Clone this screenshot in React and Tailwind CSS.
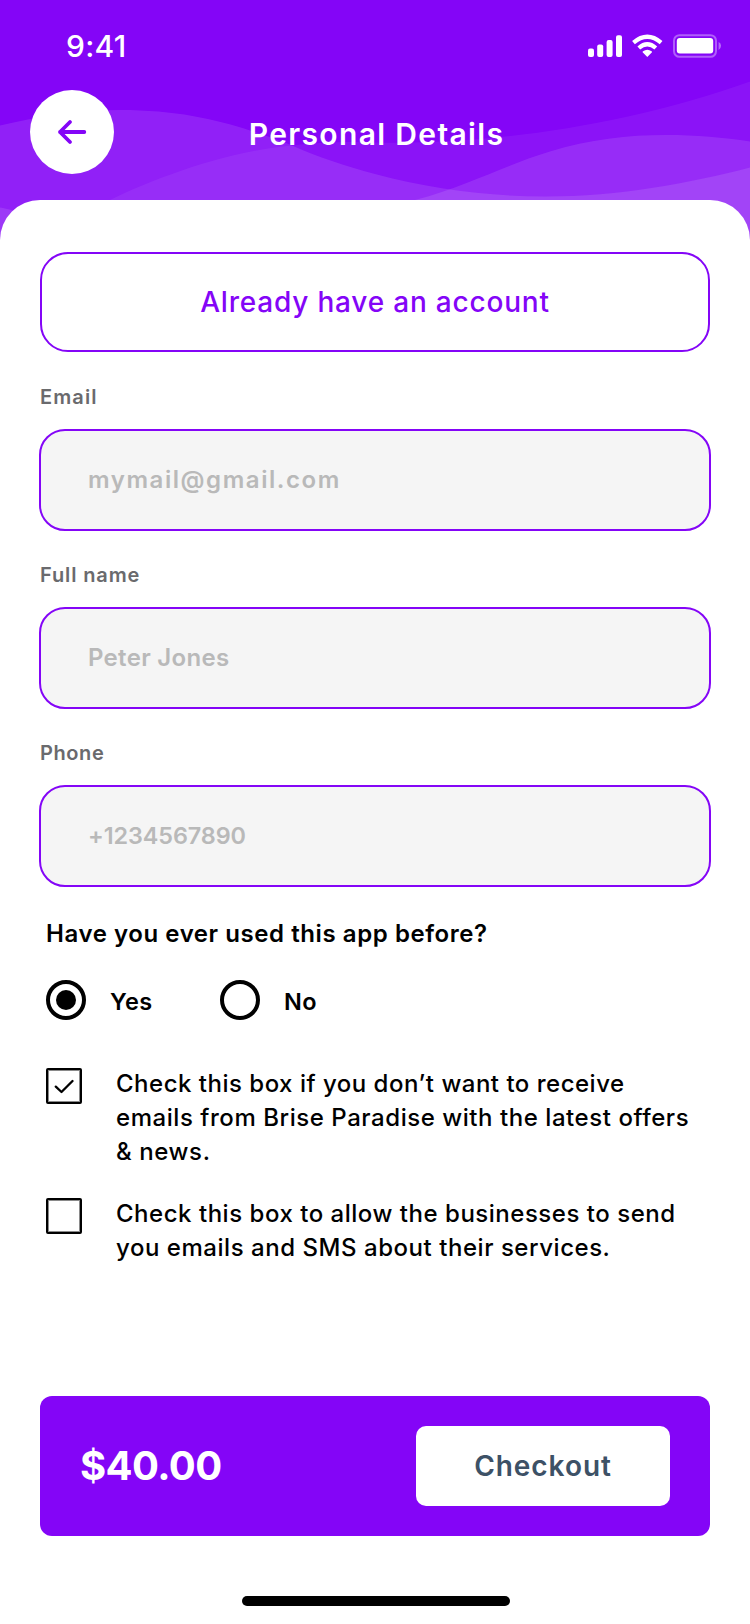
import React from "react";

function StatusBar() {
  return (
    <div className="flex h-[90px] items-start justify-between pl-[66px] pr-[29px]">
      <span className="mt-[28px] text-[30px] font-medium leading-[36px] tracking-[0.3px] text-white">9:41</span>
      <svg className="mt-[32px]" width="135" height="28" viewBox="586 32 135 28" fill="none">
        <g fill="#fff">
          <rect x="588" y="48.5" width="6" height="8.5" rx="2" />
          <rect x="597.2" y="44.5" width="6" height="12.5" rx="2" />
          <rect x="606.6" y="40" width="6" height="17" rx="2" />
          <rect x="616" y="35.3" width="6" height="21.7" rx="2" />
          <path d="M647.3 57 L652 52.3 Q652.2 51.6 651.6 51.2 Q647.3 48.2 643 51.2 Q642.4 51.6 642.6 52.3 Z" />
        </g>
        <g stroke="#fff" strokeWidth="4.2">
          <path d="M633.5 42.6 Q647.3 30.8 661.1 42.6" />
          <path d="M638.8 48 Q647.3 40.6 655.8 48" />
        </g>
        <rect x="674" y="35.2" width="42" height="21.6" rx="5.5" stroke="#fff" strokeOpacity=".36" strokeWidth="2" />
        <rect x="676.8" y="38" width="36.4" height="15.6" rx="3" fill="#fff" />
        <path d="M718.6 42 Q721.2 43.2 721 46 Q721 48.8 718.6 50 Z" fill="#fff" fillOpacity=".4" />
      </svg>
    </div>
  );
}

function Waves() {
  return (
    <svg className="absolute left-0 top-0" width="750" height="250" viewBox="0 0 750 250" fill="#fff">
      <path fillOpacity=".11" d="M0 125.5 C35 117 80 110 120 110 C175 110 215 119 250 130.5 C265 135.5 279 140 292 145.5 C318 157 345 166 375 174 C430 189 490 196.5 545 196.5 C620 196.5 690 183 750 167.5 V250 H0 Z" />
      <path fillOpacity=".06" d="M110 200 C145 183 220 152 292 145.5 C330 141 355 142 375 142.5 C480 145 620 128 750 81.5 V250 H60 Z" />
      <path fillOpacity=".11" d="M415 200 C470 185 505 165 550 151.5 C620 130 690 133 750 141.5 V250 H375 Z" />
      <path fillOpacity=".11" d="M0 207.5 C15 210 40 218 70 230 V250 H0 Z" />
    </svg>
  );
}

function Field({ label, value, className, labelTracking, valueClass }) {
  return (
    <div className={className}>
      <div className={"pl-10 text-[20px] font-semibold leading-[26px] text-[#6a6a6d] " + labelTracking}>{label}</div>
      <div className="mx-[39px] mt-[19px] flex h-[102px] items-center rounded-[26px] border-2 border-[#8405f7] bg-[#f5f5f5]">
        <span className={"pl-[47px] font-semibold leading-[30px] text-[#b9b9b9] " + valueClass}>{value}</span>
      </div>
    </div>
  );
}

function Radio({ label, checked, className, tracking }) {
  return (
    <div className={"flex items-center " + className}>
      <span className="flex h-10 w-10 items-center justify-center rounded-full border-4 border-black">
        {checked && <span className="h-5 w-5 rounded-full bg-black" />}
      </span>
      <span className={"ml-6 pt-[3px] text-[23.5px] font-semibold leading-[30px] text-black " + tracking}>{label}</span>
    </div>
  );
}

function CheckRow({ checked, children, className }) {
  return (
    <div className={"flex items-start pl-[46px] " + className}>
      <span className="mt-[2px] flex h-9 w-9 shrink-0 items-center justify-center rounded-[2px] border-2 border-black shadow-[inset_0_0_0_1px_#8a8a8a]">
        {checked && (
          <svg width="20" height="16" viewBox="0 0 20 16" fill="none" stroke="#000" strokeWidth="2.3" strokeLinecap="round" strokeLinejoin="round">
            <path d="M1.8 8.6 L7.5 14 L18.5 3" />
          </svg>
        )}
      </span>
      <div className="ml-[34px] flex flex-col whitespace-nowrap pt-px text-[24px] font-medium leading-[34px] text-black">{children}</div>
    </div>
  );
}

export default function App() {
  return (
    <div className="relative flex h-[1624px] w-[750px] flex-col overflow-hidden bg-white font-['Inter',sans-serif]">
      <div className="relative h-[250px] shrink-0 bg-[#8405f7]">
        <Waves />
        <div className="relative">
          <StatusBar />
          <div className="grid grid-cols-[84px_1fr_84px] px-[30px]">
            <button className="flex h-[84px] w-[84px] items-center justify-center rounded-full bg-white">
              <svg width="32" height="28" viewBox="56 118 32 28" fill="none" stroke="#8405f7" strokeWidth="3.8" strokeLinecap="round" strokeLinejoin="round">
                <path d="M60 132 H84.3 M70 122 L60 132 L70 142" />
              </svg>
            </button>
            <h1 className="mt-[26px] pl-[3px] text-center text-[30px] font-semibold leading-[36px] tracking-[1.35px] text-white">Personal Details</h1>
          </div>
        </div>
      </div>

      <main className="relative -mt-[50px] flex flex-1 flex-col rounded-t-[40px] bg-white pt-[52px]">
        <button className="mx-10 flex h-[100px] items-center justify-center rounded-[28px] border-2 border-[#8405f7] text-[28px] font-medium leading-[34px] tracking-[0.8px] text-[#8405f7]">
          Already have an account
        </button>
        <Field className="mt-8" label="Email" value="mymail@gmail.com" labelTracking="tracking-[1.1px]" valueClass="text-[24px] tracking-[1.55px]" />
        <Field className="mt-[31px]" label="Full name" value="Peter Jones" labelTracking="tracking-[0.88px]" valueClass="text-[24px] pb-px tracking-[0.3px]" />
        <Field className="mt-[31px]" label="Phone" value="+1234567890" labelTracking="tracking-[0.6px]" valueClass="text-[23.4px] pb-px tracking-[-0.08px]" />

        <p className="mt-[30px] pl-[46px] text-[24px] font-semibold leading-[33px] tracking-[0.57px] text-black">
          Have you ever used this app before?
        </p>
        <div className="mt-[30px] flex pl-[46px]">
          <Radio label="Yes" checked className="w-[174px]" tracking="tracking-[0.5px]" />
          <Radio label="No" className="" tracking="tracking-[0.4px]" />
        </div>

        <CheckRow checked className="mt-[46px]">
          <span className="tracking-[0.5px]">Check this box if you don’t want to receive</span>
          <span className="tracking-[0.55px]">emails from Brise Paradise with the latest offers</span>
          <span className="tracking-[0.6px]">&amp; news.</span>
        </CheckRow>
        <CheckRow className="mt-[27px]">
          <span className="tracking-[0.52px]">Check this box to allow the businesses to send</span>
          <span className="tracking-[0.54px]">you emails and SMS about their services.</span>
        </CheckRow>

        <div className="mx-10 mt-[131px] flex h-[140px] shrink-0 items-center justify-between rounded-xl bg-[#8405f7] px-10">
          <span className="text-[40px] font-bold leading-[48px] tracking-[-0.6px] text-white">$40.00</span>
          <button className="flex h-20 w-[254px] items-center justify-center rounded-[10px] bg-white text-[28px] font-semibold leading-[34px] tracking-[0.95px] text-[#3d5166]">
            Checkout
          </button>
        </div>
        <div className="ml-[242px] mt-[60px] h-[10px] w-[268px] rounded-full bg-black" />
      </main>
    </div>
  );
}
